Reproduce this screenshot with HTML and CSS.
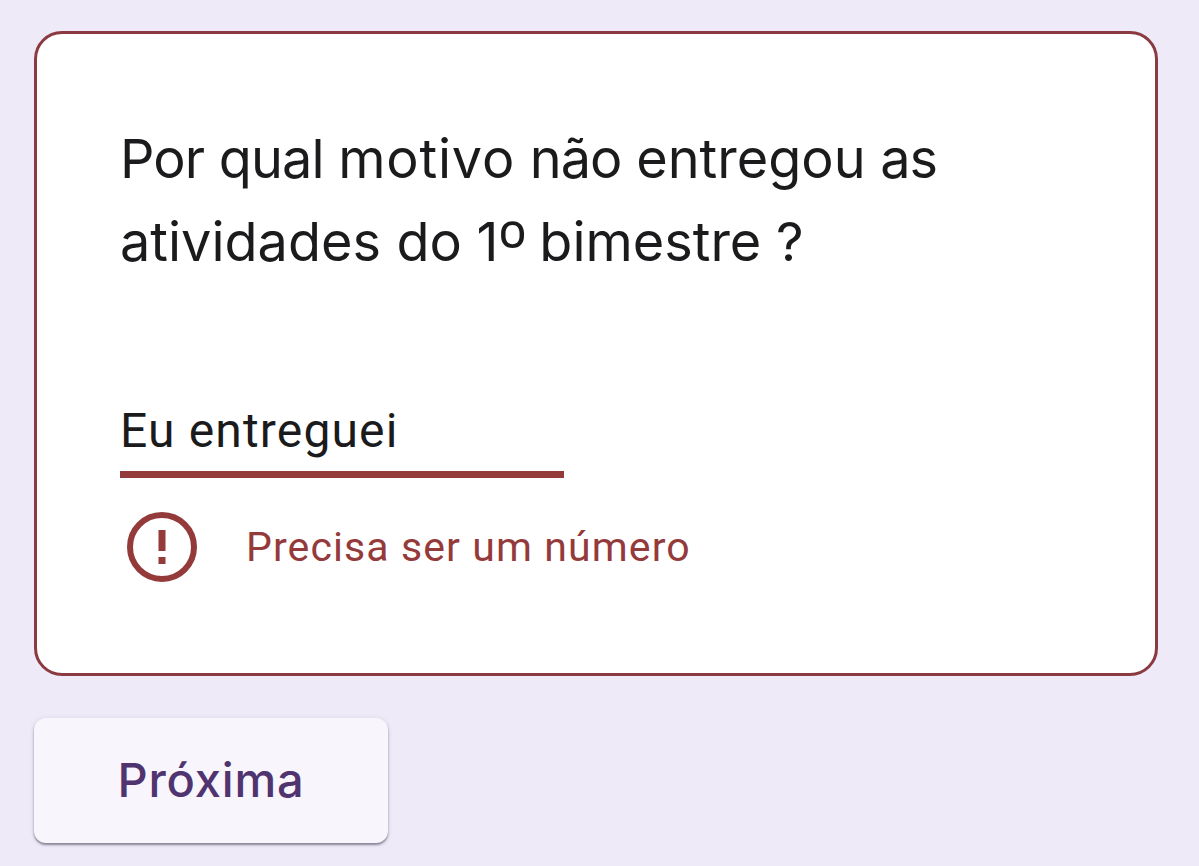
FILE: index.html
```html
<!DOCTYPE html>
<html lang="pt-BR">
<head>
    <meta charset="UTF-8">
    <meta name="viewport" content="width=device-width, initial-scale=1.0">
    <title>Formulário</title>
    <link rel="stylesheet" href="styles.css">
</head>
<body>
    <form class="form">
        <div class="card">
            <h1 class="question">Por qual <span class="wider">motivo</span> não <span class="wide">entregou</span> as<br><span class="wide">atividades do</span> 1<span class="ordinal">º</span> <span class="wide">bimestre</span> ?</h1>
            <input class="answer" type="text" value="Eu entreguei" aria-label="Resposta">
            <div class="error">
                <svg class="error-icon" viewBox="0 0 70 70">
                    <circle cx="35" cy="35" r="32" fill="none" stroke="currentColor" stroke-width="6"/>
                    <path d="M31.5 18h7v21h-7zM31.5 45h7v7h-7z" fill="currentColor"/>
                </svg>
                <span class="error-text">Precisa ser um número</span>
            </div>
        </div>
        <button class="next-button" type="button">Próxima</button>
    </form>
</body>
</html>
```

FILE: styles.css
```css
* {
    box-sizing: border-box;
}

body {
    margin: 0;
    min-height: 100vh;
    background: #eeeaf8;
    font-family: Roboto, sans-serif;
}

.form {
    padding: 31px 41px 20px 34px;
}

.card {
    height: 645px;
    padding: 83px 83px 0;
    background: #fff;
    border: 3px solid #8a3a40;
    border-radius: 28px;
}

.question {
    margin: 0;
    font-family: Inter, sans-serif;
    font-size: 54px;
    font-weight: 400;
    line-height: 83px;
    letter-spacing: -0.9px;
    word-spacing: 0.3px;
    white-space: nowrap;
    color: #1b1b1d;
}

.question .wide {
    letter-spacing: 0;
}

.question .wider {
    letter-spacing: 0.8px;
}

.ordinal {
    margin-right: -2px;
    font-size: 70px;
    font-weight: 300;
    line-height: 0;
    vertical-align: -11px;
}

.answer {
    display: block;
    width: 444px;
    height: 84px;
    margin-top: 111px;
    padding: 0 0 4px;
    border: none;
    border-bottom: 7px solid #943a3b;
    outline: none;
    background: none;
    font-family: Roboto, sans-serif;
    font-size: 48px;
    letter-spacing: 1.15px;
    color: #1b1b1d;
}

.error {
    display: flex;
    align-items: center;
    gap: 49px;
    margin-top: 34px;
    padding-left: 7px;
    color: #943a3b;
}

.error-icon {
    width: 70px;
    height: 70px;
}

.error-text {
    margin-top: -1px;
    font-size: 41px;
    letter-spacing: 1.1px;
    white-space: nowrap;
}

.next-button {
    display: block;
    width: 354px;
    height: 125px;
    margin-top: 42px;
    padding: 0 0 2px;
    border: none;
    border-radius: 12px;
    background: #f8f5fc;
    box-shadow: 0 2px 2px rgba(60, 55, 75, 0.5), 0 1px 5px rgba(60, 55, 75, 0.15);
    font-family: Inter, sans-serif;
    font-size: 47px;
    font-weight: 500;
    letter-spacing: 0.8px;
    color: #4f3470;
}
```
